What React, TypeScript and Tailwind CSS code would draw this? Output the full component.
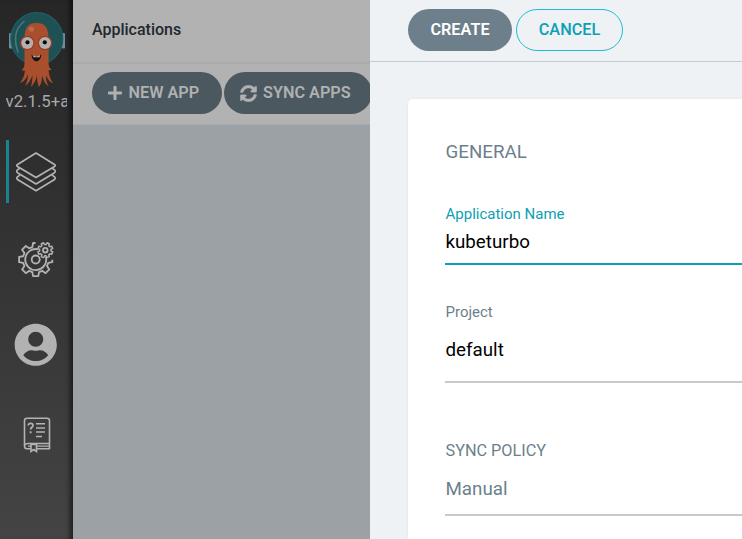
import React from "react";
import { FaPlus, FaSyncAlt, FaUserCircle } from "react-icons/fa";

function gearPath(cx: number, cy: number, inner: number, outer: number, start: number, count: number) {
  const pts: string[] = [];
  const at = (r: number, deg: number) => {
    const a = (deg * Math.PI) / 180;
    return `${(cx + r * Math.cos(a)).toFixed(2)},${(cy + r * Math.sin(a)).toFixed(2)}`;
  };
  for (let i = 0; i < count; i++) {
    const c = start + i * 45;
    pts.push(at(inner, c - 15), at(outer, c - 9), at(outer, c + 9), at(inner, c + 15));
  }
  return pts.join(" ");
}

function Logo() {
  return (
    <svg className="block h-[90px] w-[73px]" viewBox="0 0 73 90" fill="none">
      <rect x="9" y="33" width="3.500" height="15.500" rx="1" fill="#75899a" />
      <rect x="62" y="33" width="3" height="15.500" rx="1" fill="#75899a" />
      <circle cx="36.800" cy="38.700" r="26" fill="#1d5153" stroke="#235d69" strokeWidth="1.200" />
      <path d="M24 21.500C16 28 13 38 18 52" stroke="#46797c" strokeWidth="1.600" strokeLinecap="round" />
      <path
        d="M24.500 42C24.200 30 26 23 36.500 23S48.800 30 48.600 42V63C48.600 66 49.500 68.500 51.500 69.500C50 70.500 49 70.500 48.500 70C49 75 50.500 80 53 83C50 83 47.500 79 46 75C46 79 46.500 83 48.500 86C45 84.500 43.500 80 42 75.500C42 80 41.500 84 39 87C37.500 84 37 80 37 75.500C36 80 34 84 31 87C32 83 32.500 79 32.500 75C31 80 28.500 83.500 25 86C27 82 28 78 28 74C26.500 78.500 24 82 20 83C23 79 24.500 75 25 70.500C24 71 22.500 70.500 21.500 70C24 68.500 24.500 66 24.500 63Z"
        fill="#a94f2d"
      />
      <circle cx="31.500" cy="29" r="2.600" fill="#b96a4b" />
      <circle cx="27.300" cy="43" r="7.300" fill="#9b3b2b" />
      <circle cx="45" cy="43" r="7.300" fill="#9b3b2b" />
      <circle cx="27.300" cy="43" r="6" fill="#b3b0ae" />
      <circle cx="45" cy="43" r="6" fill="#b3b0ae" />
      <circle cx="27.500" cy="42.300" r="2.100" fill="#080808" />
      <circle cx="44.800" cy="42.300" r="2.100" fill="#080808" />
      <path d="M31.500 54.500C34.500 57 38.500 57 41.200 54.500C41 63.500 32 63.500 31.500 54.500Z" fill="#1b1110" />
      <path d="M32.500 55.100C35 57 38 57 40.200 55.100L39.500 57.200H33.500Z" fill="#b8b3b0" />
    </svg>
  );
}

function LayersIcon() {
  return (
    <svg className="block h-[42px] w-[42px]" viewBox="0 0 42 42" fill="none" stroke="#b3b3b3" strokeWidth="1.650" strokeLinejoin="round">
      <path d="M21 2 39.500 13.500Q41 14.500 39.500 15.500L21 26.500 2.500 15.500Q1 14.500 2.500 13.500Z" />
      <path d="M5 17 2.500 18.800Q1 20.500 2.500 21.700L21 33 39.500 21.700Q41 20.500 39.500 18.800L37 17" />
      <path d="M5 24 2.500 25.800Q1 27.300 2.500 28.500L21 39.700 39.500 28.500Q41 27.300 39.500 25.800L37 24" />
    </svg>
  );
}

function GearsIcon() {
  return (
    <svg className="block h-[42px] w-[42px]" viewBox="15 239 42 42" fill="none" stroke="#b3b3b3" strokeWidth="1.800" strokeLinejoin="round">
      <defs>
        <clipPath id="main-gear">
          <path d="M15 239H35.500V252L43.500 259.800H57V281H15Z" />
        </clipPath>
      </defs>
      <polygon points={gearPath(35.7, 259.6, 13, 16.8, 0, 8)} clipPath="url(#main-gear)" />
      <path d="M38 249.300A10.500 10.500 0 1 0 45.900 257" />
      <circle cx="35.700" cy="259.500" r="4" />
      <polygon points={gearPath(45.3, 250.2, 5.7, 7.6, 22.5, 8)} strokeWidth="1.500" />
      <circle cx="45.300" cy="250.200" r="2.300" />
    </svg>
  );
}

function DocsIcon() {
  return (
    <svg className="block h-[38px] w-[30px]" viewBox="0 0 30 38" fill="none" stroke="#b3b3b3" strokeWidth="1.600">
      <path d="M9 32.800H5Q2.500 32.800 2.500 30V4.500Q2.500 2.200 5 2.200H25Q27.500 2.200 27.500 4.500V32.800H14.500" strokeLinejoin="round" />
      <path d="M3 29.500Q3 27.500 6 27.500H27M14.500 30.200H27M6 30.200H9" strokeWidth="1.300" />
      <path d="M9 28.500V35.500L11.700 33.500 14.500 35.500V28.500Z" />
      <path d="M14 7.700H23M14 12H23M14 16H23M14 20.500H20" strokeWidth="1.600" />
      <path d="M6.200 9.500C6.200 6.700 11 6.700 11 9.500C11 11.500 8.600 11 8.600 13.500" strokeWidth="1.700" />
      <path d="M8.600 15.300V17.200" strokeWidth="1.900" />
    </svg>
  );
}

function Sidebar() {
  return (
    <aside className="flex w-[73px] shrink-0 flex-col items-center bg-linear-to-b from-[#262626] to-[#444444] shadow-[inset_-6px_0_5px_-3px_rgba(0,0,0,0.55)]">
      <div className="h-[89px] w-full"><Logo /></div>
      <div className="mr-[1px] h-[51px] w-[61px] overflow-hidden whitespace-nowrap text-[16.8px] leading-[24px] text-[#a5aaac]">v2.1.5+a</div>
      <div className="ml-[12px] flex h-[63px] w-full items-center border-l-[3px] border-[#16858f] pl-[6px]"><LayersIcon /></div>
      <div className="mt-[36px] pr-px"><GearsIcon /></div>
      <FaUserCircle className="mt-[42px] mr-px h-[43.5px] w-[43.5px] shrink-0 text-[#b2b2b2]" />
      <div className="mt-[49.5px]"><DocsIcon /></div>
    </aside>
  );
}

function Applications() {
  return (
    <main className="flex w-[297px] shrink-0 flex-col overflow-hidden bg-[#9ca1a5]">
      <header className="flex h-[64px] shrink-0 items-center border-b-2 border-[#a6abab] bg-[#b2b2b2] pb-[2px] pl-[19px] text-base font-medium text-[#21282e]">Applications</header>
      <div className="flex h-[61px] shrink-0 items-start gap-[2px] border-b border-[#a5abae] bg-[#b2b2b2] pt-[8px] pl-[19px] text-[16.25px] font-semibold text-[#b0b1b2]">
        <button className="flex h-[42px] w-[130px] shrink-0 items-center rounded-full bg-[#4c5860] pl-[15px] whitespace-nowrap"><FaPlus className="mr-[5.5px] h-[16px] w-[16px]" />NEW APP</button>
        <button className="flex h-[42px] w-[148px] shrink-0 items-center rounded-full bg-[#4c5860] pl-[16px] whitespace-nowrap"><FaSyncAlt className="mr-[6px] h-[17px] w-[17px] stroke-current stroke-[12px]" />SYNC APPS</button>
      </div>
    </main>
  );
}

function CreatePanel() {
  return (
    <section className="flex min-w-0 flex-1 flex-col bg-[#eef2f5]">
      <header className="flex h-[62px] shrink-0 gap-[4px] border-b border-[#c4ccd1] pt-[9px] pl-[38px] text-[16.25px] font-medium">
        <button className="h-[42px] w-[104px] rounded-full bg-[#6d7f8b] font-semibold text-white">CREATE</button>
        <button className="h-[42px] w-[107px] rounded-full border border-[#1fbdd0] text-[#0da0b3]">CANCEL</button>
      </header>
      <div className="mt-[37px] ml-[38px] flex flex-1 flex-col rounded-tl-[5px] bg-white pl-[37px] shadow-[0_0_3px_rgba(0,0,0,0.06)]">
        <h2 className="h-[103px] pt-[41px] pl-[0.5px] text-[18.75px] leading-[24px] text-[#6d7f8b]">GENERAL</h2>
        <div className="flex h-[63px] flex-col border-b-2 border-[#0da0b3] pl-[0.5px]">
          <label className="text-[15px] leading-[24px] text-[#0da0b3]">Application Name</label>
          <span className="mt-[4px] text-[18.75px] leading-[24px] text-black">kubeturbo</span>
        </div>
        <div className="mt-[35px] flex h-[83px] flex-col border-b-2 border-[#c9c9c9] pl-[0.5px]">
          <label className="text-[15px] leading-[24px] text-[#6d7f8b]">Project</label>
          <span className="mt-[14px] text-[18.75px] leading-[24px] text-black">default</span>
        </div>
        <div className="mt-[56px] flex h-[77px] flex-col border-b-2 border-[#c9c9c9] pl-[0.5px] text-[#6d7f8b]">
          <label className="text-[16.25px] leading-[24px]">SYNC POLICY</label>
          <span className="mt-[14px] text-[18.75px] leading-[24px]">Manual</span>
        </div>
      </div>
    </section>
  );
}

export default function App() {
  return (
    <div className="flex h-[539px] w-[742px] overflow-hidden font-['Roboto',sans-serif]">
      <Sidebar />
      <Applications />
      <CreatePanel />
    </div>
  );
}
